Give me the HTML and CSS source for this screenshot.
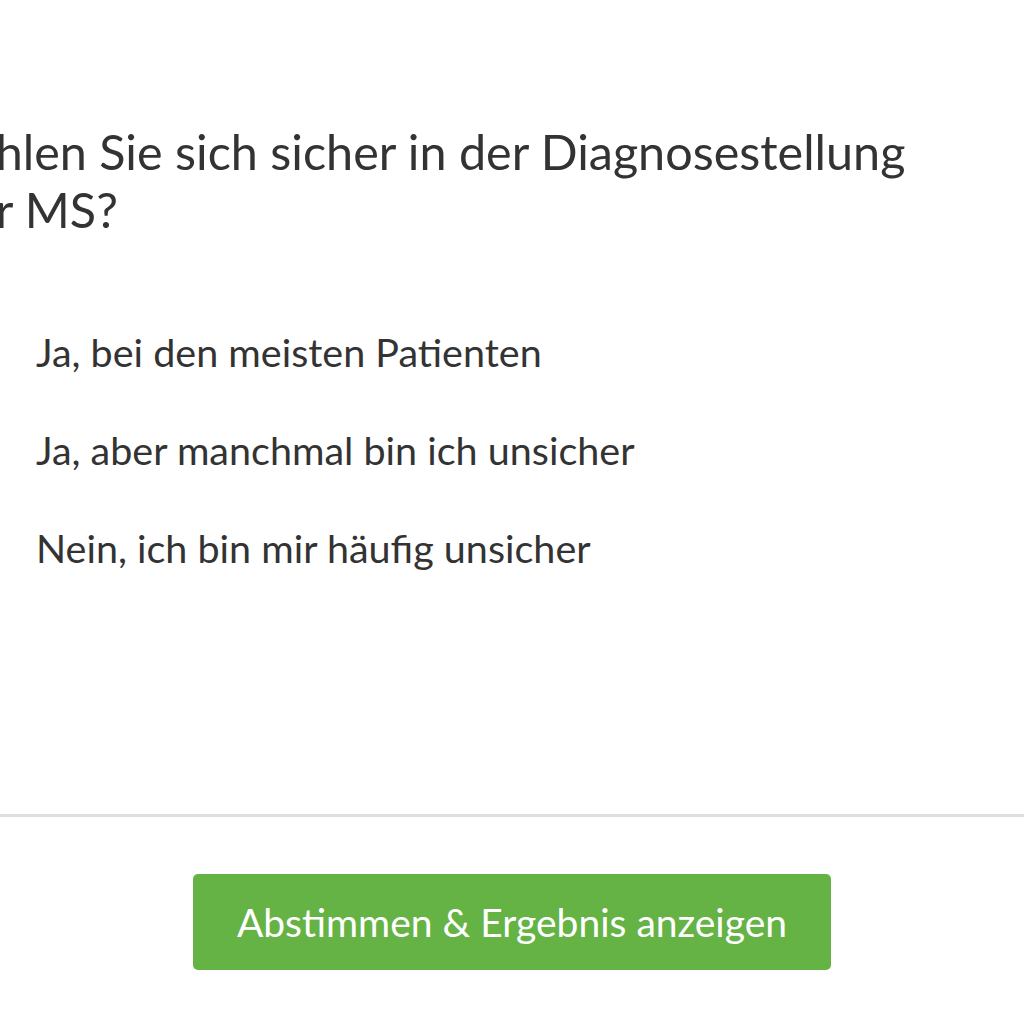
FILE: index.html
```html
<!DOCTYPE html>
<html lang="de">
<head>
  <meta charset="UTF-8" />
  <meta name="viewport" content="width=device-width, initial-scale=1.0"/>
  <title>Umfrage</title>
  <link rel="stylesheet" href="styles.css">
</head>
<body>

<div class="poll">
  <div class="poll-body">
    <h2 class="question">Fühlen Sie sich sicher in der Diagnosestellung der MS?</h2>

    <div class="answers">
      <label class="answer"><input type="radio" name="vote" value="1"> <span>Ja, bei den meisten Patienten</span></label>
      <label class="answer"><input type="radio" name="vote" value="2"> <span>Ja, aber manchmal bin ich unsicher</span></label>
      <label class="answer"><input type="radio" name="vote" value="3"> <span>Nein, ich bin mir häufig unsicher</span></label>
    </div>
  </div>

  <div class="poll-footer">
    <button class="vote-btn">Abstimmen &amp; Ergebnis anzeigen</button>
  </div>
</div>

</body>
</html>
```

FILE: styles.css
```css
body {
  font-family: Lato, 'Open Sans', sans-serif;
  background: #fff;
  margin: 0; padding: 0;
  overflow: hidden;
  color: #333;
}
.poll {
  width: 1024px;
}
.poll-body {
  margin-left: -57px;
  padding-top: 122px;
  height: 814px;
  box-sizing: border-box;
}
.question {
  font-weight: 400; font-size: 48.5px; line-height: 58px;
  margin: 0; width: 1000px;
}
.answers {
  margin-top: 94px; margin-left: 93px;
}
.answer {
  display: block; font-size: 39.5px; line-height: 40px;
  margin-bottom: 58px;
}
.answer input {
  display: none;
}
.poll-footer {
  border-top: 3px solid #dedede;
  display: flex; justify-content: center;
  padding-top: 57px;
}
.vote-btn {
  width: 638px; height: 96px;
  background: #65b345; color: #fff;
  font-family: inherit; font-size: 39px;
  border: none; border-radius: 5px;
}
```
